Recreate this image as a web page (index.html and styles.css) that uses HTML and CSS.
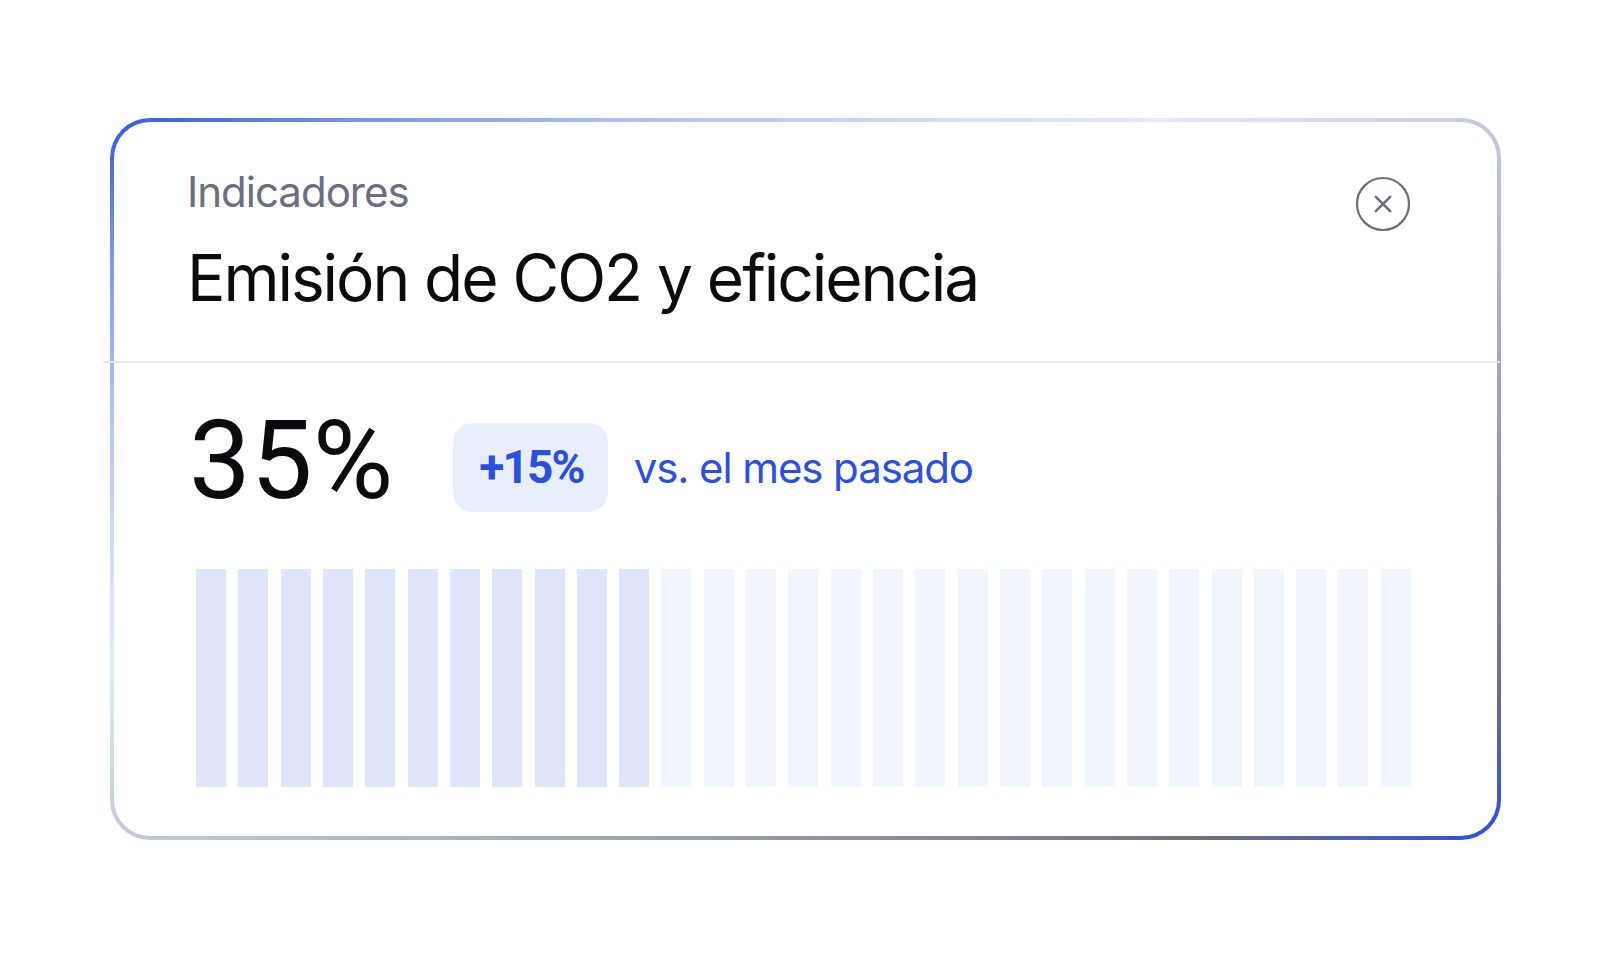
FILE: index.html
```html
<!DOCTYPE html>
<html lang="es">
<head>
<meta charset="utf-8">
<meta name="viewport" content="initial-scale=1.0, maximum-scale=1.0, user-scalable=1">
<title>Indicadores</title>
<link rel="stylesheet" href="styles.css">
</head>
<body>

<div class="page">
    <div class="indicator_card">
        <div class="card_head">
            <div class="head_text">
                <div class="eyebrow">Indicadores</div>
                <h1>Emisión de CO2 y eficiencia</h1>
            </div>
            <button class="close_btn" aria-label="Cerrar">
                <svg width="56" height="56" viewBox="0 0 56 56" fill="none">
                    <circle cx="28" cy="28" r="26" stroke="#6b6d83" stroke-width="2.2"/>
                    <path d="M20.8 20.8 L35.2 35.2 M35.2 20.8 L20.8 35.2" stroke="#6b6d83" stroke-width="2.6" stroke-linecap="round"/>
                </svg>
            </button>
        </div>
        <div class="divider"></div>
        <div class="stat_row">
            <div class="stat_value">35%</div>
            <div class="stat_delta">
                <span class="badge">+15%</span>
                <span class="delta_text">vs. el mes pasado</span>
            </div>
        </div>
        <div class="bars">
            <span class="bar on"></span><span class="bar on"></span><span class="bar on"></span>
            <span class="bar on"></span><span class="bar on"></span><span class="bar on"></span>
            <span class="bar on"></span><span class="bar on"></span><span class="bar on"></span>
            <span class="bar on"></span><span class="bar on"></span>
            <span class="bar"></span><span class="bar"></span><span class="bar"></span>
            <span class="bar"></span><span class="bar"></span><span class="bar"></span>
            <span class="bar"></span><span class="bar"></span><span class="bar"></span>
            <span class="bar"></span><span class="bar"></span><span class="bar"></span>
            <span class="bar"></span><span class="bar"></span><span class="bar"></span>
            <span class="bar"></span><span class="bar"></span><span class="bar"></span>
        </div>
    </div>
</div>

</body>
</html>
```

FILE: styles.css
```css
*,*:after,*:before{
	box-sizing: border-box;
}
body{
	font-family: Inter, "Noto Sans", sans-serif;
	margin: 0;
	background: #fff;
	color: #0b0b0f;
}
.page{
	padding: 118px 0 0 110px;
}

/* card with gradient outline */
.indicator_card{
	width: 1391px;
	border: 4px solid transparent;
	border-radius: 40px;
	background:
		linear-gradient(#fff, #fff) padding-box,
		linear-gradient(to bottom right, #3358e6 0%, #7793ee 9%, #abbcf1 18%, #d6dff8 31%, #e3e9f9 38%, #c4cadd 50%, #9a9eb2 71%, #7a7d90 85%, #6a6d82 90%, #4a5cc0 95%, #2a4fe4 100%) border-box;
	padding: 49px 86px 49px 0;
}
.card_head{
	display: flex;
	justify-content: space-between;
	align-items: flex-start;
	padding-left: 73px;
	padding-bottom: 51px;
}
.eyebrow{
	font-size: 42px;
	line-height: 1;
	letter-spacing: -0.024em;
	color: #6b6d83;
}
h1{
	margin: 33px 0 0;
	font-size: 64px;
	line-height: 1;
	font-weight: 400;
	letter-spacing: -0.032em;
}
.close_btn{
	margin-top: 5px;
	padding: 0;
	border: 0;
	background: none;
	width: 56px;
	height: 56px;
	cursor: pointer;
}
.close_btn svg{
	display: block;
}
.divider{
	height: 2px;
	background: #e6e8ed;
	margin: 0 -89px 0 -11px;
}

.stat_row{
	display: flex;
	align-items: flex-start;
	padding: 43px 0 0 75px;
}
.stat_value{
	font-family: Roboto, Inter, sans-serif;
	font-size: 110px;
	line-height: 1;
}
.stat_delta{
	display: flex;
	align-items: center;
	margin: 17px 0 0 60px;
}
.badge{
	background: #e9eefc;
	color: #2b4fe1;
	font-family: Roboto, Inter, sans-serif;
	font-size: 46px;
	font-weight: 700;
	line-height: 1;
	letter-spacing: -0.04em;
	padding: 21px 24px 22px 26px;
	border-radius: 20px;
}
.delta_text{
	color: #2b4fe1;
	font-size: 42px;
	line-height: 1;
	letter-spacing: -0.026em;
	margin-left: 26px;
}

.bars{
	display: flex;
	justify-content: space-between;
	height: 218px;
	margin: 53px 0 0 82px;
}
.bar{
	width: 30px;
	background: #f1f5fe;
}
.bar.on{
	background: #dfe5fa;
}
```
